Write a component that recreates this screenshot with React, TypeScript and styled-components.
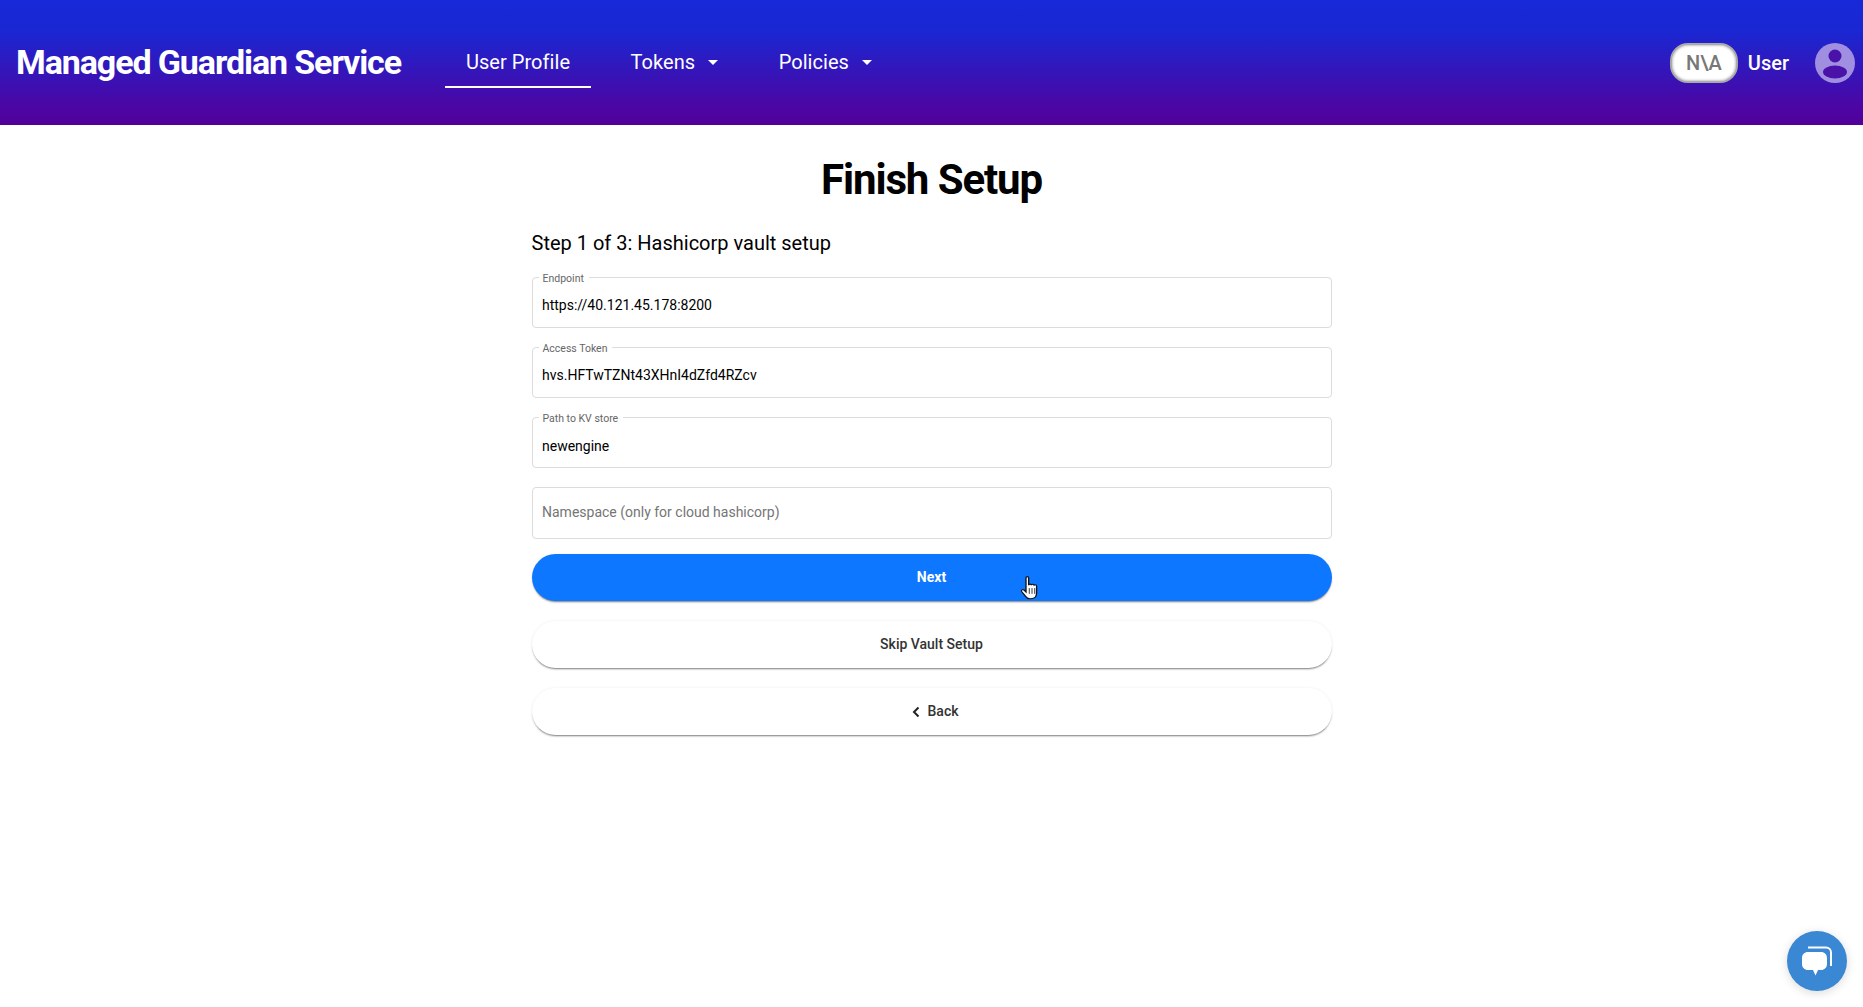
import { createGlobalStyle } from 'styled-components';
import styled from 'styled-components';

const GlobalStyle = createGlobalStyle`
  html, body {
    margin: 0;
    padding: 0;
    background: #fff;
    font-family: Roboto, "Liberation Sans", sans-serif;
  }
`;

const Page = styled.div`
  position: relative;
  height: 1007px;
  overflow: hidden;
`;

const Header = styled.header`
  height: 125px;
  display: flex;
  align-items: center;
  padding: 0 0 0 16px;
  background: linear-gradient(180deg, #1729d8 0%, #1a27d2 25%, #4b06a4 85%, #520099 100%);
  color: #fff;
`;

const Brand = styled.div`
  font-size: 34px;
  font-weight: 700;
  letter-spacing: -1.1px;
  margin-right: 44px;
  padding-bottom: 2px;
  white-space: nowrap;
`;

const Nav = styled.nav`
  display: flex;
  align-items: center;
  height: 100%;
`;

const NavItem = styled.div<{ $active?: boolean }>`
  display: flex;
  align-items: center;
  gap: 13px;
  height: 50px;
  padding: 0 21px;
  margin-right: 18.5px;
  font-size: 20px;
  letter-spacing: 0.05px;
  box-sizing: border-box;
  border-bottom: 2px solid ${(p) => (p.$active ? '#fff' : 'transparent')};
`;

const Caret = styled.span`
  width: 0;
  height: 0;
  margin-top: 2px;
  border-left: 5px solid transparent;
  border-right: 5px solid transparent;
  border-top: 5px solid #fff;
`;

const UserArea = styled.div`
  display: flex;
  align-items: center;
  margin-left: auto;
`;

const Badge = styled.div`
  width: 64px;
  height: 36px;
  display: flex;
  align-items: center;
  justify-content: center;
  border-radius: 18px;
  background: #fff;
  border: 2px solid #aaa;
  box-shadow: inset 0 0 3px #888;
  color: #777;
  font-size: 20px;
  font-weight: 500;
`;

const UserName = styled.span`
  margin-left: 10px;
  font-size: 20px;
  font-weight: 500;
`;

const Avatar = styled.svg`
  display: block;
  width: 40px;
  height: 40px;
  margin-left: 26px;
  margin-right: 8px;
`;

const Main = styled.main`
  width: 800px;
  margin: 0 auto;
`;

const Title = styled.h1`
  margin: 29px 0 0;
  height: 52px;
  line-height: 52px;
  text-align: center;
  font-size: 42px;
  font-weight: 700;
  letter-spacing: -1.1px;
  color: #000;
`;

const StepTitle = styled.h2`
  margin: 25px 0 0;
  height: 24px;
  line-height: 24px;
  font-size: 20px;
  font-weight: 400;
  color: #000;
`;

const Fields = styled.div`
  display: flex;
  flex-direction: column;
  gap: 19px;
  margin-top: 22px;
`;

const Field = styled.div<{ $tall?: boolean; $raised?: boolean }>`
  position: relative;
  box-sizing: border-box;
  height: ${(p) => (p.$tall ? 52 : 51)}px;
  display: flex;
  align-items: center;
  padding: ${(p) => (p.$raised ? 5 : 6)}px 10.5px 0;
  font-size: 14px;
  color: #000;
`;

const Outline = styled.fieldset<{ $plain?: boolean }>`
  position: absolute;
  inset: ${(p) => (p.$plain ? '0' : '-5px 0 0')};
  margin: 0;
  padding: 0 6px;
  border: 1px solid #dcdcdc;
  border-radius: 4px;
  pointer-events: none;
`;

const Legend = styled.legend`
  height: 11px;
  padding: 0 5px 0 4px;
  font-size: 10.5px;
  line-height: 13px;
  color: #666;
`;

const Placeholder = styled.span`
  margin-top: -8px;
  color: #757575;
`;

const Buttons = styled.div`
  display: flex;
  flex-direction: column;
  gap: 20px;
  margin-top: 15px;
`;

const PillButton = styled.button<{ $primary?: boolean }>`
  height: 47px;
  display: flex;
  align-items: center;
  justify-content: center;
  gap: 6px;
  padding: 0 0 2px;
  border: 0;
  border-radius: 24px;
  background: ${(p) => (p.$primary ? '#0d77ff' : '#fff')};
  color: ${(p) => (p.$primary ? '#fff' : '#333')};
  font-family: inherit;
  font-size: 14px;
  font-weight: ${(p) => (p.$primary ? 700 : 500)};
  box-shadow: 0 2px 2px -1px rgba(0, 0, 0, 0.5), 0 0 3px rgba(0, 0, 0, 0.07);
`;

const BackIcon = styled.svg`
  display: block;
  width: 12px;
  height: 12px;
  margin: 3px 0 0 5px;
`;

const Pointer = styled.svg`
  position: absolute;
  left: 1021px;
  top: 576px;
  width: 17px;
  height: 24px;
`;

const ChatBubble = styled.div`
  position: absolute;
  right: 16px;
  bottom: 16px;
  width: 60px;
  height: 60px;
  display: flex;
  align-items: center;
  justify-content: center;
  border-radius: 50%;
  background: #3a87d3;
  box-shadow: 0 2px 10px rgba(0, 0, 0, 0.15);
`;

const ChatIcon = styled.svg`
  display: block;
  width: 32px;
  height: 32px;
`;

export default function App() {
  return (
    <Page>
      <GlobalStyle />
      <Header>
        <Brand>Managed Guardian Service</Brand>
        <Nav>
          <NavItem $active>User Profile</NavItem>
          <NavItem>
            Tokens <Caret />
          </NavItem>
          <NavItem>
            Policies <Caret />
          </NavItem>
        </Nav>
        <UserArea>
          <Badge>N\A</Badge>
          <UserName>User</UserName>
          <Avatar viewBox="0 0 40 40">
            <circle cx="20" cy="20" r="20" fill="#a08ee0" />
            <circle cx="20" cy="13" r="6.5" fill="#4a12a8" />
            <ellipse cx="20" cy="29" rx="12" ry="6.5" fill="#4a12a8" />
          </Avatar>
        </UserArea>
      </Header>
      <Main>
        <Title>Finish Setup</Title>
        <StepTitle>Step 1 of 3: Hashicorp vault setup</StepTitle>
        <Fields>
          <Field $raised>
            <Outline>
              <Legend>Endpoint</Legend>
            </Outline>
            https://40.121.45.178:8200
          </Field>
          <Field $raised>
            <Outline>
              <Legend>Access Token</Legend>
            </Outline>
            hvs.HFTwTZNt43XHnI4dZfd4RZcv
          </Field>
          <Field>
            <Outline>
              <Legend>Path to KV store</Legend>
            </Outline>
            newengine
          </Field>
          <Field $tall>
            <Outline $plain />
            <Placeholder>Namespace (only for cloud hashicorp)</Placeholder>
          </Field>
        </Fields>
        <Buttons>
          <PillButton $primary>Next</PillButton>
          <PillButton>Skip Vault Setup</PillButton>
          <PillButton>
            <BackIcon viewBox="0 0 12 12">
              <path d="M8.5 1.5 L4 6 L8.5 10.5" fill="none" stroke="#222" strokeWidth="2" />
            </BackIcon>
            Back
          </PillButton>
        </Buttons>
      </Main>
      <Pointer viewBox="0.4 0.4 15.6 25" preserveAspectRatio="none">
        <path
          d="M5 2.2c0-1.6 2.4-1.6 2.4 0V10c.3-1.6 2.4-1.5 2.5 0 .3-1.4 2.3-1.3 2.4.3.4-1.2 2.3-1 2.4.6v7.2c0 3.5-2 6-5 6H8.5c-2 0-3.2-1.2-4.3-3L1 16.6c-.8-1.4 1-2.8 2.2-1.6L5 17V2.2z"
          fill="#fff"
          stroke="#111"
          strokeWidth="1.2"
        />
        <path d="M8 13v6M10.5 13v6M13 13v6" stroke="#111" strokeWidth="0.8" />
      </Pointer>
      <ChatBubble>
        <ChatIcon viewBox="0 0 32 32">
          <path d="M7 2.5H25a5 5 0 0 1 5 5V21" fill="none" stroke="#fff" strokeWidth="2" />
          <path
            d="M7 7h13c3.5 0 6 2.5 6 6v6c0 3.5-2.5 6-6 6h-3l-2.5 5.5L12 25H7c-3.5 0-6-2.5-6-6v-6c0-3.5 2.5-6 6-6z"
            fill="#fff"
          />
        </ChatIcon>
      </ChatBubble>
    </Page>
  );
}
